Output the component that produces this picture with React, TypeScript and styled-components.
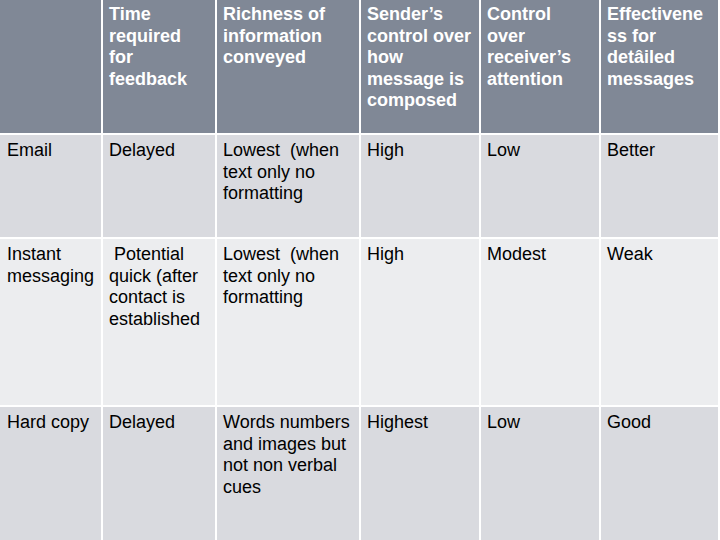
import React from "react";
import styled, { createGlobalStyle } from "styled-components";

const Global = createGlobalStyle`
  html, body { margin: 0; padding: 0; background: #ffffff; }
  body { width: 720px; height: 540px; overflow: hidden; }
`;

const Grid = styled.div`
  display: grid;
  grid-template-columns: 101px 112px 142px 118px 118px 117px;
  grid-template-rows: 133px 102px 166px 133px;
  gap: 2px;
  width: 720px;
  height: 540px;
  background: #ffffff;
  font-family: "Liberation Sans", Arial, sans-serif;
  font-size: 18px;
  line-height: 21.6px;
`;

type Tone = "head" | "dark" | "light";

const bg: Record<Tone, string> = {
  head: "#808896",
  dark: "#d9dadf",
  light: "#ecedef",
};

const Cell = styled.div<{ $tone: Tone; $first?: boolean }>`
  background: ${(p) => bg[p.$tone]};
  color: ${(p) => (p.$tone === "head" ? "#ffffff" : "#000000")};
  font-weight: ${(p) => (p.$tone === "head" ? 700 : 400)};
  padding: ${(p) => (p.$tone === "head" ? "4px" : "5px")} 6px 0
    ${(p) => (p.$first ? "7px" : "6px")};
  white-space: pre-wrap;
  overflow-wrap: anywhere;
  overflow: hidden;
`;

const header = [
  "",
  "Time required for feedback",
  "Richness of information conveyed",
  "Sender\u2019s control over how message is composed",
  "Control over receiver\u2019s attention",
  "Effectiveness for det\u00e2iled messages",
];

const rows: { tone: Tone; cells: string[] }[] = [
  {
    tone: "dark",
    cells: ["Email", "Delayed", "Lowest  (when text only no formatting", "High", "Low", "Better"],
  },
  {
    tone: "light",
    cells: [
      "Instant messaging",
      " Potential quick (after contact is established",
      "Lowest  (when text only no formatting",
      "High",
      "Modest",
      "Weak",
    ],
  },
  {
    tone: "dark",
    cells: [
      "Hard copy",
      "Delayed",
      "Words numbers and images but not non verbal cues",
      "Highest",
      "Low",
      "Good",
    ],
  },
];

export default function App() {
  return (
    <>
      <Global />
      <Grid>
        {header.map((h, i) => (
          <Cell key={"h" + i} $tone="head" $first={i === 0}>
            {h}
          </Cell>
        ))}
        {rows.map((r, ri) =>
          r.cells.map((c, ci) => (
            <Cell key={ri + "-" + ci} $tone={r.tone} $first={ci === 0}>
              {c}
            </Cell>
          ))
        )}
      </Grid>
    </>
  );
}
